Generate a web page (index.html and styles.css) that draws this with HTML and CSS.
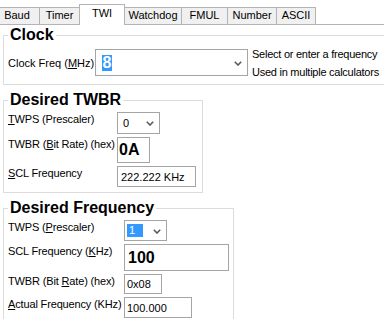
FILE: index.html
```html
<!DOCTYPE html>
<html lang="en">
<head>
    <meta charset="UTF-8">
    <title>TWI Calculator</title>
    <link rel="stylesheet" href="styles.css">
</head>
<body>
    <div class="tabs">
        <div class="tab tab-baud">Baud</div>
        <div class="tab tab-timer">Timer</div>
        <div class="tab tab-twi active">TWI</div>
        <div class="tab tab-watchdog">Watchdog</div>
        <div class="tab tab-fmul">FMUL</div>
        <div class="tab tab-number">Number</div>
        <div class="tab tab-ascii">ASCII</div>
    </div>

    <fieldset class="group group-clock">
        <legend>Clock</legend>
        <div class="clock-row">
            <label class="clock-label">Clock Freq (<u>M</u>Hz)</label>
            <div class="combo combo-clock">
                <span class="selected big">8</span>
                <svg class="chevron" width="8" height="5" viewBox="0 0 8 5"><polyline points="0.8,0.8 4,4 7.2,0.8" fill="none" stroke="#5a5a5a" stroke-width="1.6"/></svg>
            </div>
            <div class="hint">Select or enter a frequency<br>Used in multiple calculators</div>
        </div>
    </fieldset>

    <fieldset class="group group-twbr">
        <legend>Desired TWBR</legend>
        <div class="fields">
            <label><u>T</u>WPS (Prescaler)</label>
            <div class="combo combo-small combo-twps">
                <span class="value">0</span>
                <svg class="chevron" width="8" height="5" viewBox="0 0 8 5"><polyline points="0.8,0.8 4,4 7.2,0.8" fill="none" stroke="#5a5a5a" stroke-width="1.6"/></svg>
            </div>

            <label>TWBR (<u>B</u>it Rate) (hex)</label>
            <input class="box box-big box-twbr" type="text" value="0A" readonly>

            <label><u>S</u>CL Frequency</label>
            <input class="box box-scl" type="text" value="222.222 KHz" readonly>
        </div>
    </fieldset>

    <fieldset class="group group-freq">
        <legend>Desired Frequency</legend>
        <div class="fields">
            <label>TWPS (<u>P</u>rescaler)</label>
            <div class="combo combo-small combo-twps2">
                <span class="selected small">1</span>
                <svg class="chevron" width="8" height="5" viewBox="0 0 8 5"><polyline points="0.8,0.8 4,4 7.2,0.8" fill="none" stroke="#5a5a5a" stroke-width="1.6"/></svg>
            </div>

            <label>SCL Frequency (<u>K</u>Hz)</label>
            <input class="box box-big box-khz" type="text" value="100">

            <label>TWBR (Bit <u>R</u>ate) (hex)</label>
            <input class="box box-hex" type="text" value="0x08" readonly>

            <label><u>A</u>ctual Frequency (KHz)</label>
            <input class="box box-actual" type="text" value="100.000" readonly>
        </div>
    </fieldset>
</body>
</html>
```

FILE: styles.css
```css
html, body {
    overflow: hidden;
}
body {
    margin: 0;
    background: #fff;
    color: #000;
    font: 11px "Liberation Sans", Arial, sans-serif;
}

/* tab strip */
.tabs {
    display: flex;
    align-items: flex-end;
    height: 25px;
    box-sizing: border-box;
    border-bottom: 1px solid #b4b4b4;
}
.tab {
    box-sizing: border-box;
    height: 17px;
    margin-left: -1px;
    border: 1px solid #b4b4b4;
    border-bottom: none;
    background: #f0f0f0;
    text-align: center;
    line-height: 15px;
    white-space: nowrap;
}
.tab.active {
    position: relative;
    z-index: 1;
    height: 21px;
    margin-bottom: -1px;
    background: #fff;
    line-height: 17px;
}
.tab-baud { margin-left: -6px; width: 46px; }
.tab-timer { width: 41px; }
.tab-twi { width: 46px; }
.tab-watchdog { width: 58px; }
.tab-fmul { width: 47px; }
.tab-number { width: 50px; }
.tab-ascii { width: 40px; }

/* group boxes */
.group {
    box-sizing: border-box;
    margin: 7px 0 0 3px;
    padding: 4px 4px 5px;
    border: 1px solid #dcdcdc;
    min-width: 0;
}
.group legend {
    padding: 0 2px;
    font: bold 16px/16px "Liberation Sans", Arial, sans-serif;
}
.group-clock {
    width: 440px;
    margin-top: 2px;
    padding: 6px 4px 8px;
}
.group-twbr { width: 200px; }
.group-freq { width: 231px; }

.clock-row {
    display: flex;
    align-items: center;
    height: 27px;
}
.clock-label {
    width: 87px;
    white-space: nowrap;
}
.hint {
    margin-left: 4px;
    line-height: 18px;
    white-space: nowrap;
    letter-spacing: -0.25px;
}

.fields {
    display: grid;
    grid-template-columns: 109px max-content;
    row-gap: 3px;
    align-items: start;
}
.group-freq .fields {
    grid-template-columns: 116px max-content;
}
.fields label {
    padding-top: 1px;
    line-height: 13px;
    white-space: nowrap;
    letter-spacing: -0.15px;
}

/* combo boxes */
.combo {
    box-sizing: border-box;
    display: flex;
    align-items: center;
    justify-content: space-between;
    border: 1px solid #a5a5a5;
    background: #fff;
}
.combo-clock {
    width: 153px;
    height: 27px;
    padding: 0 5px 0 6px;
}
.combo-small {
    width: 43px;
    padding: 0 5px 0 5px;
}
.combo-twps { height: 22px; }
.combo-twps2 { height: 21px; padding-left: 2px; }
.chevron {
    display: block;
    margin-top: 1px;
}
.selected {
    background: #3399ff;
    color: #fff;
}
.selected.big {
    width: 10px;
    height: 16px;
    font: bold 16px/16px "Liberation Sans", Arial, sans-serif;
    text-align: center;
}
.selected.small {
    width: 14px;
    height: 13px;
    padding-left: 2px;
    line-height: 13px;
}

/* text boxes */
.box {
    box-sizing: border-box;
    display: block;
    margin: 0;
    padding: 0 2px;
    border: 1px solid #a5a5a5;
    background: #fff;
    color: #000;
    font: 11px "Liberation Sans", Arial, sans-serif;
    outline: none;
}
.box-big {
    font: bold 16px "Liberation Sans", Arial, sans-serif;
}
.box-twbr { width: 33px; height: 26px; padding-left: 1px; }
.box-scl { width: 79px; height: 21px; padding-left: 3px; }
.box-khz { width: 105px; height: 27px; padding-left: 3px; }
.box-hex { width: 38px; height: 20px; }
.box-actual { width: 68px; height: 21px; }
```
